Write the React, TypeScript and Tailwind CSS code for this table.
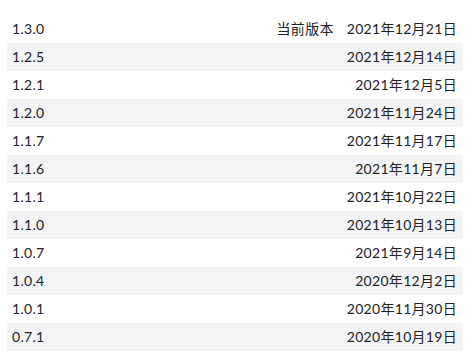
import React from "react";

const rows: [string, string][] = [
  ["1.3.0", "2021年12月21日"],
  ["1.2.5", "2021年12月14日"],
  ["1.2.1", "2021年12月5日"],
  ["1.2.0", "2021年11月24日"],
  ["1.1.7", "2021年11月17日"],
  ["1.1.6", "2021年11月7日"],
  ["1.1.1", "2021年10月22日"],
  ["1.1.0", "2021年10月13日"],
  ["1.0.7", "2021年9月14日"],
  ["1.0.4", "2020年12月2日"],
  ["1.0.1", "2020年11月30日"],
  ["0.7.1", "2020年10月19日"],
];

export default function App() {
  return (
    <div
      className="w-[470px] h-[360px] bg-white px-[7px] pt-[15px] text-[14px] tracking-[0.3px] text-[#222]"
      style={{ fontFamily: 'Lato, "Noto Sans CJK SC", sans-serif' }}
    >
      {rows.map(([v, d], i) => (
        <div
          key={v}
          className={`flex h-[28px] items-center justify-between pl-[5px] pr-[6px] leading-[28px] ${
            i % 2 === 1 ? "bg-[#f3f4f6]" : "bg-white"
          }`}
        >
          <span>{v}</span>
          <span className="flex items-center">
            {i === 0 && <span className="mr-[13px]">当前版本</span>}
            <span>{d}</span>
          </span>
        </div>
      ))}
    </div>
  );
}
